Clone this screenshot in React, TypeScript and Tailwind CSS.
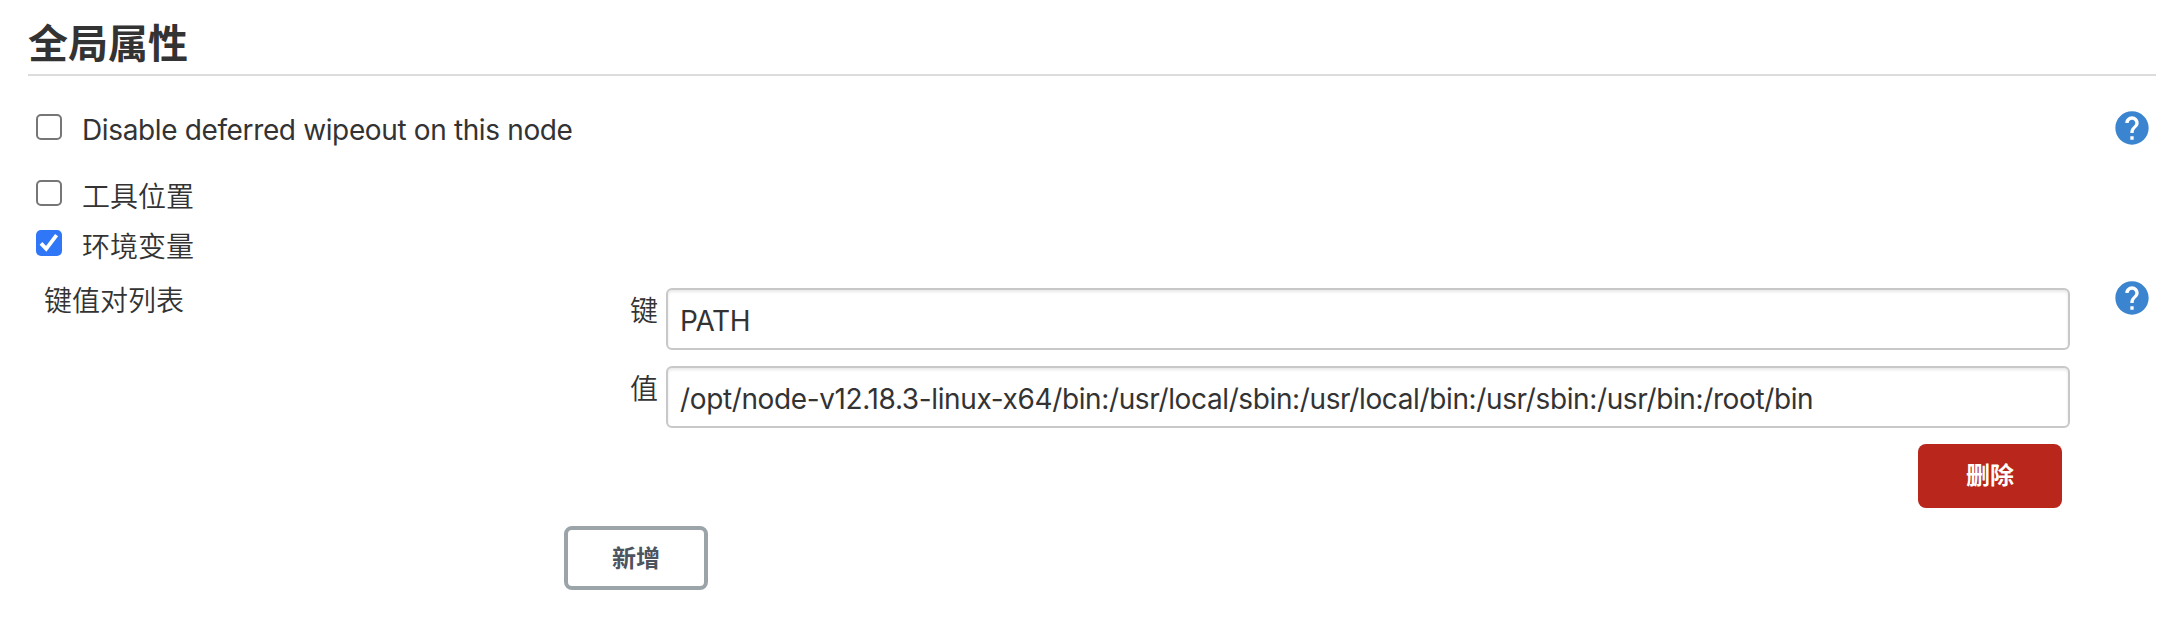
import type { ReactNode } from 'react';

function HelpIcon() {
  return (
    <svg viewBox="0 0 24 24" className="block size-10 shrink-0 fill-[#3b84cf]" aria-label="help">
      <path d="M12 2C6.48 2 2 6.48 2 12s4.48 10 10 10 10-4.48 10-10S17.52 2 12 2zm1 17h-2v-2h2v2zm2.07-7.75l-.9.92C13.45 12.9 13 13.5 13 15h-2v-.5c0-1.1.45-2.1 1.17-2.83l1.24-1.26c.37-.36.59-.86.59-1.41 0-1.1-.9-2-2-2s-2 .9-2 2H8c0-2.21 1.79-4 4-4s4 1.79 4 4c0 .88-.36 1.68-.93 2.25z" />
    </svg>
  );
}

function Checkbox({ checked = false }: { checked?: boolean }) {
  return (
    <span
      role="checkbox"
      aria-checked={checked}
      className={
        checked
          ? 'flex size-[26px] shrink-0 items-center justify-center rounded-[5px] bg-[#2f77f6]'
          : 'block size-[26px] shrink-0 rounded-[5px] border-2 border-[#767676] bg-white'
      }
    >
      {checked && (
        <svg viewBox="0 0 26 26" className="size-[26px] fill-none stroke-white stroke-[3.8]">
          <path d="M5 13.4 10.2 18.8 20.6 5.2" />
        </svg>
      )}
    </span>
  );
}

function Option({ checked, children }: { checked?: boolean; children: ReactNode }) {
  return (
    <label className="flex gap-5 pl-2">
      <Checkbox checked={checked} />
      <span className="mt-1 h-[22px] leading-[26px] font-[350] whitespace-nowrap">{children}</span>
    </label>
  );
}

function Field({ label, value }: { label: string; value: string }) {
  return (
    <div className="flex">
      <span className="mt-[9px] w-9 shrink-0 leading-[28px] font-[350]">{label}</span>
      <div className="flex h-[62px] flex-1 items-center rounded-md border-2 border-[#c8c8c8] bg-white px-3 pt-[3px] shadow-[inset_0_2px_3px_rgba(0,0,0,0.09)]">
        <span className="tracking-[-0.375px]">{value}</span>
      </div>
    </div>
  );
}

export default function App() {
  return (
    <main className="h-[640px] w-[2178px] overflow-hidden bg-white pr-[22px] pl-7 font-[Inter,'Noto_Sans_CJK_SC',sans-serif] text-[28px] text-[#333333]">
      <h2 className="h-[76px] border-b-2 border-[#dcdcdc] pt-6 text-[40px] leading-[40px] font-semibold">
        全局属性
      </h2>
      <div className="flex justify-between pt-8 pr-1">
        <div className="pt-[6px]">
          <Option>
            <span className="-mt-px block font-normal tracking-[-0.365px]">Disable deferred wipeout on this node</span>
          </Option>
        </div>
        <HelpIcon />
      </div>
      <div className="mt-8 flex flex-col gap-6">
        <Option>工具位置</Option>
        <Option checked>环境变量</Option>
      </div>
      <div className="mt-[22px] flex pr-1">
        <div className="mt-[9px] w-[536px] shrink-0 pl-4 leading-[28px] font-[350]">键值对列表</div>
        <div className="mt-[10px] flex flex-1 flex-col">
          <div className="flex flex-col gap-4 pl-[66px]">
            <Field label="键" value="PATH" />
            <Field label="值" value="/opt/node-v12.18.3-linux-x64/bin:/usr/local/sbin:/usr/local/bin:/usr/sbin:/usr/bin:/root/bin" />
          </div>
          <button className="mt-4 mr-2 h-16 w-36 self-end rounded-lg bg-[#b9261b] text-2xl font-bold text-white">
            删除
          </button>
          <button className="mt-[18px] h-16 w-36 rounded-lg border-4 border-[#9ba4a9] bg-white pt-px text-2xl font-bold text-[#4d545d]">
            新增
          </button>
        </div>
        <div className="ml-[42px]">
          <HelpIcon />
        </div>
      </div>
    </main>
  );
}
